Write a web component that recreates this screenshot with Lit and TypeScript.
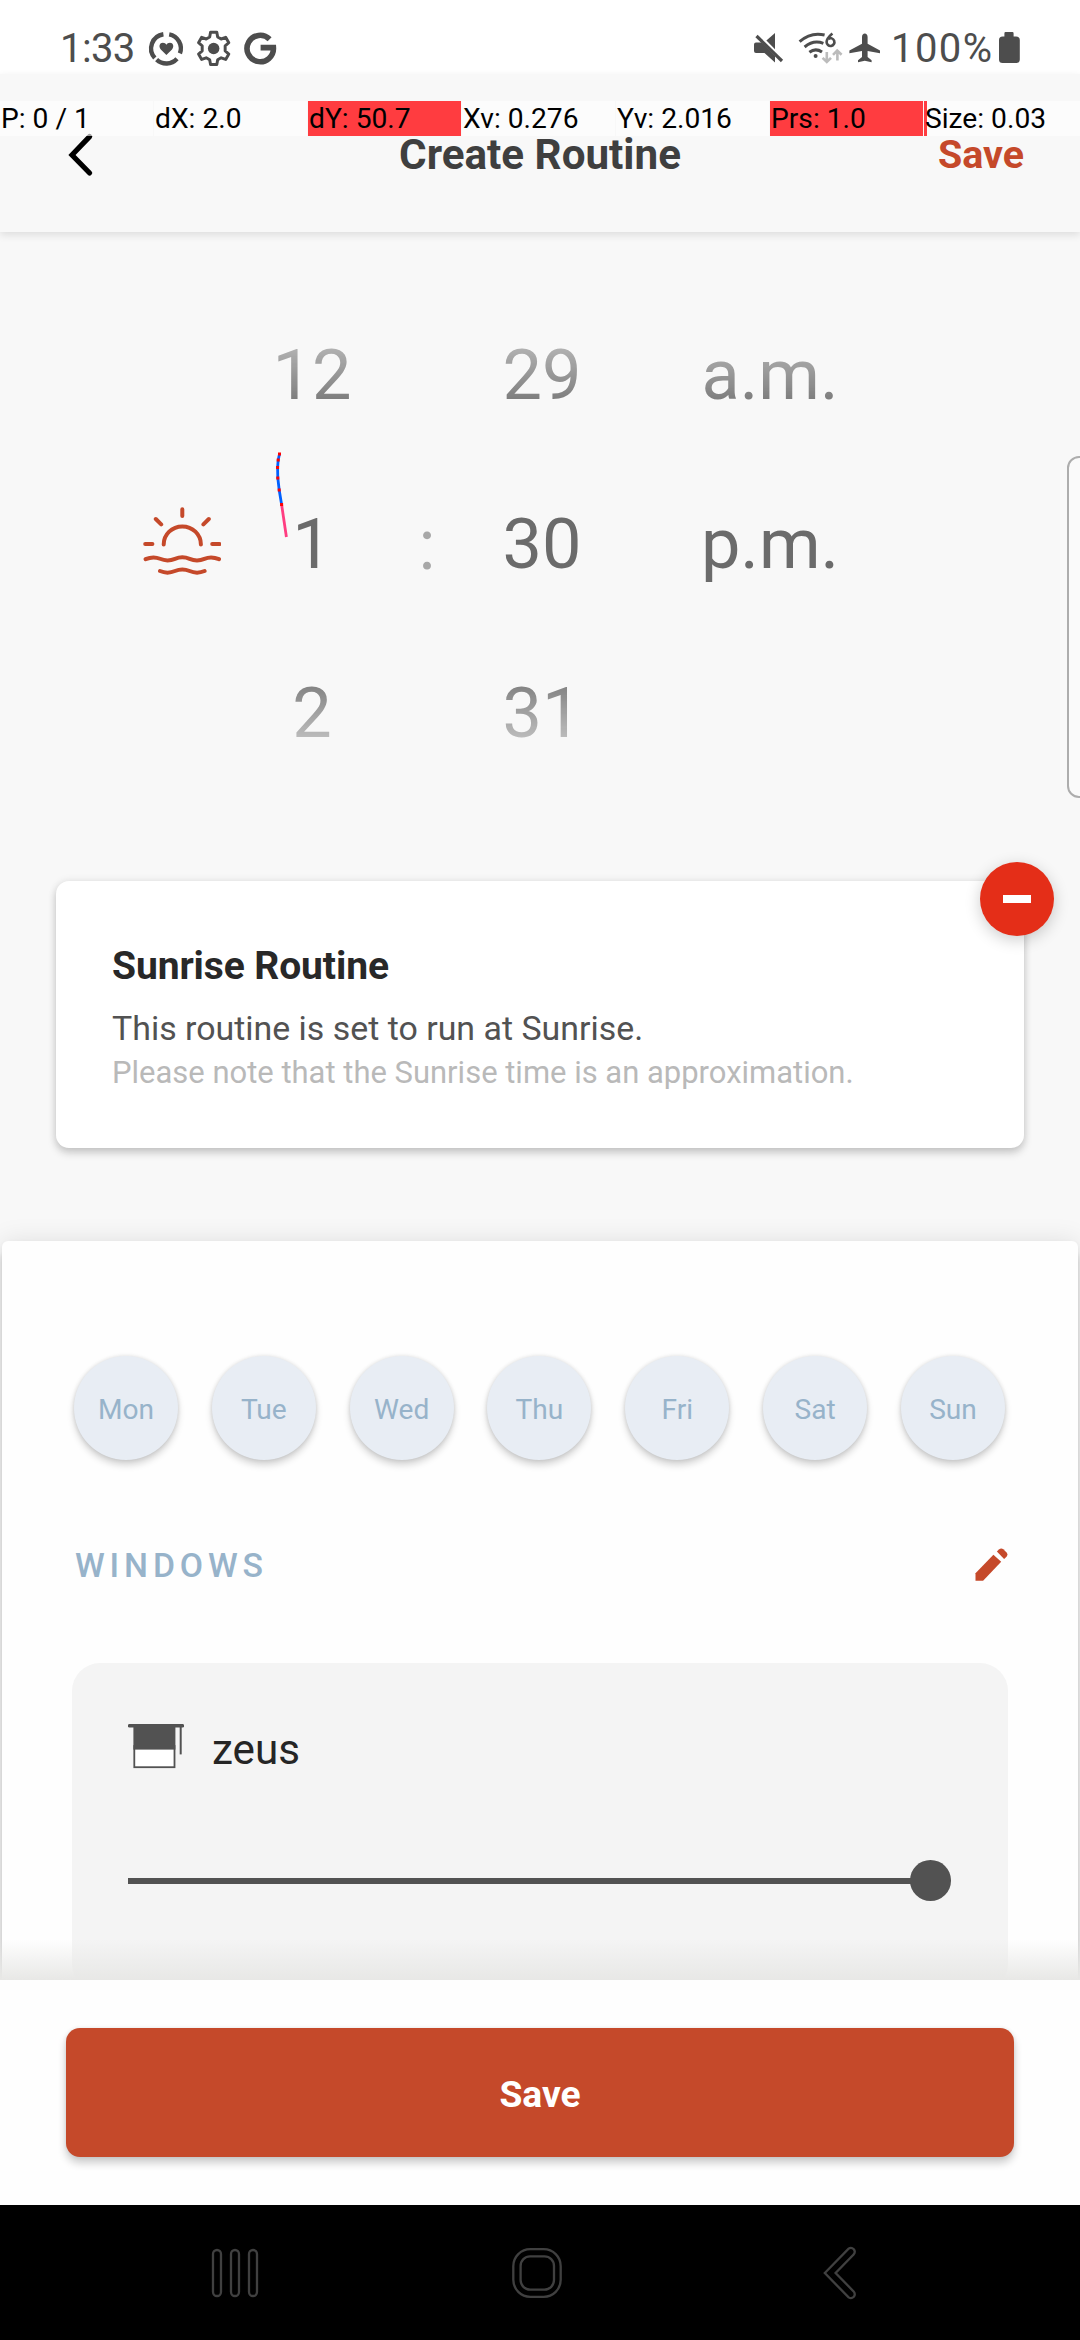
import { LitElement, html, css, svg } from "lit";
import { customElement, property } from "lit/decorators.js";
import { classMap } from "lit/directives/class-map.js";

interface Reading {
  text: string;
  state?: "hot" | "edge";
}

const READINGS: Reading[] = [
  { text: "P: 0 / 1" },
  { text: "dX: 2.0" },
  { text: "dY: 50.7", state: "hot" },
  { text: "Xv: 0.276" },
  { text: "Yv: 2.016" },
  { text: "Prs: 1.0", state: "hot" },
  { text: "Size: 0.03", state: "edge" },
];

const DAYS = ["Mon", "Tue", "Wed", "Thu", "Fri", "Sat", "Sun"];

@customElement("status-bar")
class StatusBar extends LitElement {
  static styles = css`
    :host {
      display: flex;
      justify-content: space-between;
      height: 74px;
      padding: 0 60px 0 60px;
      box-sizing: border-box;
      background: #fff;
      color: #4d4d4d;
      font-size: 40px;
      line-height: 47px;
    }
    .group {
      display: flex;
      padding-top: 25px;
    }
    svg {
      display: block;
      flex: none;
      height: 40px;
      margin-top: 3px;
      fill: currentColor;
    }
    .time {
      width: 85px;
      letter-spacing: -0.6px;
    }
    .level {
      width: 107px;
      letter-spacing: 1.4px;
    }
  `;

  render() {
    return html`
      <div class="group">
        <span class="time">1:33</span>
        <svg width="140" viewBox="145 28 140 40">
          <g fill="none" stroke="currentColor" stroke-width="4.4">
            <path d="M163.4 34.3A14.3 14.3 0 0 0 154.8 58" />
            <path d="M156.6 59.6A14.3 14.3 0 0 0 177 58.8" />
            <path d="M169.2 34.3A14.3 14.3 0 0 1 179.9 53.4" />
          </g>
          <path
            d="M166.4 55L160.8 49.4C158.2 46.4 159.8 42.8 162.8 42.8C164.6 42.8 165.8 43.6 166.4 44.8C167 43.6 168.2 42.8 170 42.8C173 42.8 174.6 46.4 172 49.4Z"
          />
          <g transform="translate(192.8 27.6) scale(1.74)">
            <path
              fill-rule="evenodd"
              d="M10.2 2.7h3.6l.5 2.7 2 1.15 2.6-.95 1.8 3.1-2.1 1.8v2.9l2.1 1.8-1.8 3.1-2.6-.95-2 1.15-.5 2.7h-3.6l-.5-2.7-2-1.15-2.6.95-1.8-3.1 2.1-1.8v-2.9l-2.1-1.8 1.8-3.1 2.6.95 2-1.15z"
              fill="none"
              stroke="currentColor"
              stroke-width="1.7"
              stroke-linejoin="round"
            />
            <circle cx="12" cy="12" r="3.3" />
          </g>
          <path
            d="M269.6 39.2A13.2 13.2 0 1 0 273.4 47.6H260.6"
            fill="none"
            stroke="currentColor"
            stroke-width="5.6"
          />
        </svg>
      </div>
      <div class="group">
        <svg width="142" viewBox="748 28 142 40">
          <path d="M755 42.5H760.5L774 56V62.4L763.5 53H755Q753 53 753 51V44.5Q753 42.5 755 42.5Z" />
          <path d="M765.4 40.6L774 33V49.2Z" />
          <path d="M755.5 36L781 61" stroke="currentColor" stroke-width="3.2" />
          <g fill="none" stroke="currentColor" stroke-width="3">
            <path d="M798.6 41.6Q810 31.6 823.6 35" />
            <path d="M803.6 47Q812.5 39.6 822.4 43.4" />
            <path d="M808.4 52.2Q814.6 47.6 821 52" />
            <path
              d="M831.4 33.4Q825.6 38.4 825.6 42A3.9 3.9 0 1 0 827.4 38.8"
              stroke-width="2.6"
            />
          </g>
          <circle cx="814.6" cy="56" r="2" />
          <g fill="none" stroke="#bcbcbc" stroke-width="2.6">
            <path d="M825.8 52V62M821.6 57.8L825.8 62L830 57.8" />
            <path d="M836.4 60.6V50.4M832 54.8L836.2 50.6L840.6 54.8" />
          </g>
          <path
            d="M863.8 33.6C862.2 33.6 861 35 861 37V43.8L848.4 50.4V53.2L861 51V57L857 60.2V62.2L863.8 60.8L870.6 62.2V60.2L866.6 57V51L879 53.2V50.4L866.6 43.8V37C866.6 35 865.4 33.6 863.8 33.6Z"
          />
        </svg>
        <span class="level">100%</span>
        <svg width="22" viewBox="998 28 22 40">
          <path
            d="M1005.5 32H1012.5Q1013.6 32 1013.6 33.4V36.4H1016Q1019.8 36.4 1019.8 40V59.5Q1019.8 63 1016 63H1002.6Q999 63 999 59.5V40Q999 36.4 1002.6 36.4H1004.4V33.4Q1004.4 32 1005.5 32Z"
          />
        </svg>
      </div>
    `;
  }
}

@customElement("pointer-readings")
class PointerReadings extends LitElement {
  static styles = css`
    :host {
      display: grid;
      grid-template-columns: repeat(6, 153px) 1fr;
      column-gap: 1px;
      height: 35px;
      color: #000;
      font-size: 28.2px;
      line-height: 35px;
      white-space: nowrap;
    }
    .cell {
      padding-left: 1px;
      background: rgba(255, 255, 255, 0.62);
    }
    .hot {
      background: #ff3c40;
    }
    .edge {
      background: linear-gradient(90deg, #ff3c40 3px, rgba(255, 255, 255, 0.62) 3px);
    }
  `;

  render() {
    return READINGS.map(
      (r) => html`<div class=${classMap({ cell: true, hot: r.state === "hot", edge: r.state === "edge" })}>${r.text}</div>`
    );
  }
}

@customElement("screen-header")
class ScreenHeader extends LitElement {
  static styles = css`
    :host {
      display: grid;
      grid-template-columns: 1fr auto 1fr;
      align-items: center;
      height: 158px;
      padding: 3px 56px 0;
      box-sizing: border-box;
      background: #f8f8f8;
      box-shadow: 0 3px 8px rgba(0, 0, 0, 0.11);
      font-weight: 700;
      font-size: 42.2px;
      line-height: 50px;
      color: #3f3f3f;
    }
    svg {
      display: block;
      margin-left: 10px;
    }
    .save {
      justify-self: end;
      color: #c5492a;
      font-size: 39.4px;
    }
  `;

  render() {
    return html`
      <svg width="32" height="46" viewBox="66 130 32 46">
        <path d="M89.6 134.6L72 153L89.6 171" fill="none" stroke="#000" stroke-width="5.2" stroke-linecap="round" />
      </svg>
      <span>Create Routine</span>
      <span class="save">Save</span>
    `;
  }
}

@customElement("time-wheel")
class TimeWheel extends LitElement {
  @property({ attribute: false }) values: string[] = [];

  static styles = css`
    :host {
      display: grid;
      grid-template-rows: repeat(3, 169px);
      height: 520px;
      padding-top: 15px;
      box-sizing: border-box;
      color: #6b6b6b;
      font-size: 70.3px;
      line-height: 169px;
      text-align: center;
      -webkit-mask-image: linear-gradient(transparent 0, #000 143px, #000 388px, transparent 516px);
      mask-image: linear-gradient(transparent 0, #000 143px, #000 388px, transparent 516px);
    }
  `;

  render() {
    return this.values.map((v) => html`<div>${v}</div>`);
  }
}

@customElement("time-picker")
class TimePicker extends LitElement {
  static styles = css`
    :host {
      display: grid;
      grid-template-columns: 78px 176px 60px 170px 164px;
      align-items: center;
      padding: 0 0 0 143px;
      height: 520px;
    }
    .hours {
      width: 176px;
      margin-left: 3px;
    }
    .period {
      margin: 0 -61px 0 61px;
    }
    .colon {
      color: #a8a8a8;
      font-size: 70.3px;
      line-height: 169px;
      text-align: center;
      padding-top: 19px;
    }
    svg {
      display: block;
      margin-top: 10px;
    }
  `;

  render() {
    return html`
      <svg width="78" height="70" viewBox="143 506 78 70">
        <g fill="none" stroke="#c5492a" stroke-width="4" stroke-linecap="round" stroke-linejoin="round">
          <path d="M163.7 544.4A18.6 18 0 0 1 200.9 544.4" />
          <path d="M182.3 509.2V516M155.8 519L161.2 524.4M208.8 519L203.4 524.4M145.2 544H152.4M212.2 544H219.4" />
          <path
            d="M145.6 559.2C151 556.8 156 557 160 558.8C165.5 561.2 169.5 561.2 175 558.8C180 556.6 184.6 556.6 189.6 558.8C195 561.2 199 561.2 204.4 558.8C209 556.8 213.6 556.8 219 559.2"
          />
          <path d="M160 571C165.5 573.4 169.5 573.4 175 571C180 568.8 184.6 568.8 189.6 571C195 573.4 199 573.4 204.6 571" />
        </g>
      </svg>
      <time-wheel class="hours" .values=${["12", "1", "2"]}></time-wheel>
      <div class="colon">:</div>
      <time-wheel .values=${["29", "30", "31"]}></time-wheel>
      <time-wheel class="period" .values=${["a.m.", "p.m.", ""]}></time-wheel>
    `;
  }
}

@customElement("routine-card")
class RoutineCard extends LitElement {
  static styles = css`
    :host {
      display: block;
      position: relative;
      margin: 0 56px;
      height: 267px;
      padding: 61px 56px 0;
      box-sizing: border-box;
      border-radius: 13px;
      background: #fff;
      box-shadow: 0 5px 9px rgba(0, 0, 0, 0.18), 0 0 8px rgba(0, 0, 0, 0.09);
      white-space: nowrap;
    }
    .title {
      font-size: 39px;
      line-height: 48px;
      font-weight: 700;
      letter-spacing: -0.1px;
      color: #282828;
    }
    .text {
      margin-top: 18px;
      font-size: 33.9px;
      line-height: 42px;
      color: #525252;
    }
    .note {
      margin-top: 3px;
      font-size: 30.98px;
      line-height: 39px;
      color: #b9b9b9;
    }
    .remove {
      position: absolute;
      top: -19px;
      right: -29.5px;
      width: 74px;
      height: 74px;
      display: grid;
      place-items: center;
      border-radius: 50%;
      background: #e42e18;
      box-shadow: 0 4px 16px rgba(0, 0, 0, 0.2);
    }
    .minus {
      width: 28px;
      height: 7.5px;
      background: #fff;
    }
  `;

  render() {
    return html`
      <div class="title">Sunrise Routine</div>
      <div class="text">This routine is set to run at Sunrise.</div>
      <div class="note">Please note that the Sunrise time is an approximation.</div>
      <div class="remove"><div class="minus"></div></div>
    `;
  }
}

@customElement("window-panel")
class WindowPanel extends LitElement {
  @property() name = "";
  @property({ type: Number }) level = 100;

  static styles = css`
    :host {
      display: block;
      flex: none;
      height: 329px;
      padding: 61px 56px 0;
      box-sizing: border-box;
      border-radius: 28px;
      background: #f4f4f4;
    }
    .head {
      display: flex;
      gap: 28px;
      height: 50px;
      color: #252525;
      font-size: 42.2px;
      line-height: 52px;
    }
    svg {
      display: block;
    }
    .slider {
      display: flex;
      align-items: center;
      height: 41px;
      margin-top: 86px;
    }
    .fill {
      height: 6px;
      margin-top: 1px;
      background: #525252;
    }
    .knob {
      flex: none;
      width: 41.5px;
      height: 41px;
      margin-left: -20px;
      border-radius: 50%;
      background: #525252;
    }
  `;

  render() {
    return html`
      <div class="head">
        <svg width="56" height="45" viewBox="128 1724 56 45">
          <rect x="134.3" y="1746" width="40.2" height="21.2" fill="#fff" stroke="#525252" stroke-width="1.8" />
          <rect x="133.4" y="1726" width="42" height="23.6" fill="#525252" />
          <rect x="128" y="1724" width="56" height="3.6" rx="1.4" fill="#525252" />
          <path d="M180.7 1727V1754.4" stroke="#525252" stroke-width="2" />
        </svg>
        <span>${this.name}</span>
      </div>
      <div class="slider">
        <div class="fill" style="width:${this.level}%"></div>
        <div class="knob"></div>
      </div>
    `;
  }
}

@customElement("routine-sheet")
class RoutineSheet extends LitElement {
  static styles = css`
    :host {
      display: flex;
      flex-direction: column;
      height: 739px;
      margin: 0 2px;
      padding: 115px 70px 0;
      box-sizing: border-box;
      border-radius: 6px 6px 0 0;
      background: #fefefe;
      box-shadow: 0 14px 5px 2px rgba(0, 0, 0, 0.09), 0 2px 5px rgba(0, 0, 0, 0.05), 0 0 26px rgba(0, 0, 0, 0.1);
    }
    .days {
      display: flex;
      flex: none;
      justify-content: space-between;
      margin: 0 3px 0 2px;
    }
    .day {
      width: 104px;
      height: 104px;
      padding-top: 3px;
      box-sizing: border-box;
      border-radius: 50%;
      background: #e8edf4;
      box-shadow: 0 5px 7px rgba(0, 0, 0, 0.17), 0 0 4px rgba(0, 0, 0, 0.12);
      color: #97b3ca;
      font-size: 28.1px;
      line-height: 101px;
      text-align: center;
    }
    .section {
      display: flex;
      flex: none;
      justify-content: space-between;
      align-items: center;
      height: 42px;
      margin: 84px 0 77px;
      padding-left: 3px;
      color: #97b3ca;
      font-size: 33.75px;
      font-weight: 500;
      letter-spacing: 4.9px;
    }
    svg {
      display: block;
    }
  `;

  render() {
    return html`
      <div class="days">${DAYS.map((d) => html`<div class="day">${d}</div>`)}</div>
      <div class="section">
        <span>WINDOWS</span>
        <svg width="33" height="34" viewBox="975.5 1548 33 34" fill="#c5492a">
          <path d="M976 1580.8V1573.3L993.9 1554.8L1001.7 1561.8L983.6 1580.8Z" />
          <path d="M997.4 1551.6L999.4 1549.6Q1001.6 1547.6 1003.8 1549.2L1006.8 1552.2Q1009 1554.4 1007 1556.8L1004.6 1559Z" />
        </svg>
      </div>
      <window-panel name="zeus" level="97.3"></window-panel>
    `;
  }
}

@customElement("save-footer")
class SaveFooter extends LitElement {
  static styles = css`
    :host {
      display: block;
      position: relative;
      height: 225px;
      padding: 48px 66px;
      box-sizing: border-box;
      background: #fefefe;
    }
    :host::before {
      content: "";
      position: absolute;
      left: 0;
      right: 0;
      bottom: 100%;
      height: 40px;
      background: linear-gradient(rgba(232, 232, 230, 0), #e8e8e6);
    }
    .button {
      height: 129px;
      border-radius: 14px;
      background: #c5492a;
      box-shadow: 0 6px 8px rgba(0, 0, 0, 0.2), 0 0 4px rgba(0, 0, 0, 0.08);
      color: #fff;
      font-size: 37.2px;
      font-weight: 700;
      line-height: 133px;
      text-align: center;
    }
  `;

  render() {
    return html`<div class="button">Save</div>`;
  }
}

@customElement("nav-keys")
class NavKeys extends LitElement {
  static styles = css`
    :host {
      display: flex;
      align-items: center;
      justify-content: space-between;
      height: 135px;
      padding: 0 222px 0 210px;
      box-sizing: border-box;
      background: #000;
    }
    svg {
      display: block;
      fill: none;
      stroke: #404040;
      stroke-width: 2.3;
    }
    .home {
      margin-right: 10px;
    }
  `;

  render() {
    const bars = [213, 231, 249];
    return html`
      <svg width="52" height="52" viewBox="210 2247 52 52">
        ${bars.map((x) => svg`<rect x=${x} y="2250" width="8" height="46" rx="4" />`)}
      </svg>
      <svg class="home" width="52" height="52" viewBox="511 2247 52 52">
        <rect x="513.3" y="2249.2" width="47.4" height="47.6" rx="17" />
        <rect x="520.6" y="2256.4" width="33.4" height="33.2" rx="9.5" />
      </svg>
      <svg width="36" height="54" viewBox="822 2246 36 54">
        <path
          d="M824.8 2273L848.6 2248.6Q851.4 2246.8 853.8 2249.2Q855.8 2251.8 853.6 2254.6L835.6 2273L853.6 2291.4Q855.8 2294.2 853.8 2296.8Q851.4 2299.2 848.6 2297.4Z"
        />
      </svg>
    `;
  }
}

@customElement("app-root")
class AppRoot extends LitElement {
  static styles = css`
    :host {
      display: flex;
      flex-direction: column;
      position: relative;
      width: 1080px;
      height: 2340px;
      overflow: hidden;
      background: #f8f8f8;
      font-family: Roboto, "Liberation Sans", sans-serif;
    }
    pointer-readings {
      position: absolute;
      top: 101px;
      left: 0;
      right: 0;
    }
    time-picker {
      margin-top: 44px;
    }
    routine-card {
      margin-top: 85px;
    }
    routine-sheet {
      margin-top: 93px;
    }
    .trail {
      position: absolute;
      left: 270px;
      top: 446px;
    }
    .handle {
      position: absolute;
      top: 456px;
      right: -12px;
      width: 25px;
      height: 342px;
      box-sizing: border-box;
      border: 2.5px solid #adadad;
      border-radius: 12px;
      background: #fafafa;
    }
  `;

  render() {
    const samples = [
      [279.5, 454],
      [278.2, 460],
      [277.6, 467.5],
      [277.8, 478],
      [279.2, 490],
      [281.6, 504.5],
    ];
    return html`
      <status-bar></status-bar>
      <screen-header></screen-header>
      <time-picker></time-picker>
      <routine-card></routine-card>
      <routine-sheet></routine-sheet>
      <save-footer></save-footer>
      <nav-keys></nav-keys>
      <pointer-readings></pointer-readings>
      <svg class="trail" width="24" height="100" viewBox="270 446 24 100" fill="none" stroke-width="2.8">
        <path d="M281.6 504.5L286.4 537" stroke="#ff3d81" />
        <polyline points=${samples.map((p) => p.join(",")).join(" ")} stroke="#0060ff" />
        ${samples.map(([x, y]) => svg`<rect x=${x - 1.5} y=${y - 1.5} width="3" height="3" fill="#f00" />`)}
      </svg>
      <div class="handle"></div>
    `;
  }
}
